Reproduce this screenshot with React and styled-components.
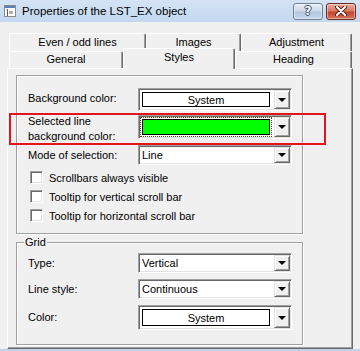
import React from 'react';
import styled, { createGlobalStyle } from 'styled-components';

const GlobalStyle = createGlobalStyle`
  html, body {
    margin: 0;
    padding: 0;
    background: #f0f0f0;
  }
  body {
    font-family: "Liberation Sans", Arial, sans-serif;
    font-size: 11px;
    color: #000;
  }
`;

const Window = styled.div`
  width: 360px;
  height: 351px;
  box-sizing: border-box;
  display: flex;
  flex-direction: column;
  background: #f0f0f0;
  border-bottom: 2px solid #bcd3ec;
  overflow: hidden;
`;

const TitleBar = styled.div`
  height: 22px;
  flex: none;
  display: flex;
  align-items: center;
  padding: 0 4px;
  background: linear-gradient(#d4e4f5, #c3d8ef);
`;

const TitleText = styled.div`
  margin-left: 6px;
  flex: 1;
  font-size: 11.5px;
  color: #000;
`;

const CaptionButton = styled.div`
  box-sizing: border-box;
  width: 30px;
  height: 17px;
  margin-left: ${(p) => (p.$close ? 3 : 0)}px;
  border: 1px solid ${(p) => (p.$close ? '#6b2a25' : '#6e7f98')};
  border-radius: 3px;
  display: flex;
  align-items: center;
  justify-content: center;
  background: ${(p) =>
    p.$close
      ? 'linear-gradient(#eaab9c 0%, #d67b66 45%, #c4472f 55%, #d6735a 100%)'
      : 'linear-gradient(#e8eff8 0%, #ccd9ea 45%, #b3c6de 55%, #c6d6ea 100%)'};
  box-shadow: inset 0 0 0 1px rgba(255, 255, 255, 0.45);
`;

const HelpGlyph = styled.span`
  font-family: "DejaVu Sans", sans-serif;
  font-weight: bold;
  font-size: 12px;
  color: #fff;
  line-height: 1;
  text-shadow: -1px 0 #3a4c66, 1px 0 #3a4c66, 0 -1px #3a4c66, 0 1px #3a4c66;
`;

const Body = styled.div`
  flex: 1;
  padding: 11px 7px 0 7px;
`;

const TabRow = styled.div`
  display: flex;
  margin-left: 2px;
  height: ${(p) => p.$h}px;
`;

const Tab = styled.div`
  box-sizing: border-box;
  width: ${(p) => p.$w}px;
  height: ${(p) => (p.$active ? 21 : p.$h)}px;
  margin-top: ${(p) => (p.$active ? -3 : 0)}px;
  padding-bottom: ${(p) => (p.$active ? 4 : 2)}px;
  display: flex;
  align-items: center;
  justify-content: center;
  background: #f0f0f0;
  border-top: 1px solid #fff;
  border-left: 1px solid #fff;
  border-right: 1px solid #696969;
  border-radius: 2px 2px 0 0;
  box-shadow: inset -1px 0 0 #a0a0a0;
  position: relative;
  z-index: ${(p) => (p.$active ? 2 : 1)};
`;

const Panel = styled.div`
  box-sizing: border-box;
  width: 346px;
  height: 281px;
  padding: 6px 0 0 8px;
  border-top: 1px solid #fff;
  border-left: 1px solid #fff;
  border-right: 1px solid #696969;
  border-bottom: 1px solid #696969;
  box-shadow: inset -1px -1px 0 #a0a0a0;
`;

const Group = styled.div`
  box-sizing: border-box;
  position: relative;
  width: 287px;
  height: ${(p) => p.$h}px;
  margin-top: ${(p) => p.$mt || 0}px;
  padding: ${(p) => p.$pt}px 0 0 11px;
  border: 1px solid #a0a0a0;
  box-shadow: inset 1px 1px 0 #fff, 1px 1px 0 #fff;
`;

const Legend = styled.span`
  position: absolute;
  top: -7px;
  left: 7px;
  padding: 0 1px;
  background: #f0f0f0;
  line-height: 13px;
`;

const Row = styled.div`
  position: relative;
  display: flex;
  align-items: center;
  margin-top: ${(p) => p.$mt || 0}px;

  ${(p) =>
    p.$marked &&
    `
    &::after {
      content: '';
      position: absolute;
      top: -2px;
      bottom: -6px;
      left: -19px;
      right: -24px;
      border: 2px solid #e3141b;
      pointer-events: none;
    }
  `}
`;

const Label = styled.div`
  width: 110px;
  line-height: 15px;
  margin-top: ${(p) => (p.$tall ? -5 : p.$up ? -2 : 0)}px;
  margin-bottom: ${(p) => (p.$tall ? -5 : 0)}px;
  padding-top: ${(p) => (p.$tall ? 4 : 0)}px;
`;

const Combo = styled.div`
  box-sizing: border-box;
  width: 154px;
  height: ${(p) => p.$h}px;
  display: flex;
  align-items: stretch;
  background: #fff;
  border-top: 1px solid #a0a0a0;
  border-left: 1px solid #a0a0a0;
  border-right: 1px solid #fff;
  border-bottom: 1px solid #fff;
  box-shadow: inset 1px 1px 0 #696969, inset -1px -1px 0 #e3e3e3;
  padding: 1px;
`;

const ComboText = styled.div`
  flex: 1;
  display: flex;
  align-items: center;
  padding-left: 2px;
`;

const ColorField = styled.div`
  flex: 1;
  display: flex;
  align-items: center;
  padding: 2px 4px 2px 2px;
`;

const Swatch = styled.div`
  box-sizing: border-box;
  flex: 1;
  height: 100%;
  display: flex;
  align-items: center;
  justify-content: center;
  border: 1px solid #000;
  background: ${(p) => p.$color};
  outline: ${(p) => (p.$focus ? '1px dotted #6b4a10' : 'none')};
  outline-offset: 1px;
`;

const DropButton = styled.div`
  box-sizing: border-box;
  width: 16px;
  display: flex;
  align-items: center;
  justify-content: center;
  background: #f0f0f0;
  border-top: 1px solid #e3e3e3;
  border-left: 1px solid #e3e3e3;
  border-right: 1px solid #696969;
  border-bottom: 1px solid #696969;
  box-shadow: inset 1px 1px 0 #fff, inset -1px -1px 0 #a0a0a0;
`;

const Arrow = styled.span`
  width: 0;
  height: 0;
  border-left: 4px solid transparent;
  border-right: 4px solid transparent;
  border-top: 4px solid #000;
`;

const CheckRow = styled.div`
  display: flex;
  align-items: center;
  height: 19px;
  margin-top: ${(p) => p.$mt || 0}px;
  padding-left: 2px;
`;

const CheckBox = styled.span`
  box-sizing: border-box;
  width: 13px;
  height: 13px;
  margin-right: 6px;
  background: #fff;
  border-top: 1px solid #a0a0a0;
  border-left: 1px solid #a0a0a0;
  border-right: 1px solid #fff;
  border-bottom: 1px solid #fff;
  box-shadow: inset 1px 1px 0 #696969, inset -1px -1px 0 #e3e3e3;
`;

const WindowIcon = () => (
  <svg width="12" height="12" viewBox="0 0 12 12">
    <rect x="0.5" y="0.5" width="11" height="11" fill="#fff" stroke="#8a8a8a" />
    <rect x="1" y="1" width="10" height="2" fill="#5b7fb8" />
    <rect x="3" y="4" width="1" height="7" fill="#c0392b" />
    <rect x="5" y="6" width="4" height="3" fill="#b0b0b0" />
  </svg>
);

const CloseGlyph = () => (
  <svg width="12" height="10" viewBox="0 0 12 10">
    <path d="M2 1 L10 9 M10 1 L2 9" stroke="#5a2018" strokeWidth="4" strokeLinecap="round" />
    <path d="M2 1 L10 9 M10 1 L2 9" stroke="#fff" strokeWidth="2" strokeLinecap="round" />
  </svg>
);

const Drop = ({ h, children }) => (
  <Combo $h={h}>
    {children}
    <DropButton>
      <Arrow />
    </DropButton>
  </Combo>
);

const App = () => {
  return (
    <Window>
      <GlobalStyle />
      <TitleBar>
        <WindowIcon />
        <TitleText>Properties of the LST_EX object</TitleText>
        <CaptionButton>
          <HelpGlyph>?</HelpGlyph>
        </CaptionButton>
        <CaptionButton $close>
          <CloseGlyph />
        </CaptionButton>
      </TitleBar>
      <Body>
        <TabRow $h={18}>
          <Tab $w={137} $h={18}>Even / odd lines</Tab>
          <Tab $w={95} $h={18}>Images</Tab>
          <Tab $w={111} $h={18}>Adjustment</Tab>
        </TabRow>
        <TabRow $h={17}>
          <Tab $w={114} $h={17}>General</Tab>
          <Tab $w={112} $h={17} $active>Styles</Tab>
          <Tab $w={117} $h={17}>Heading</Tab>
        </TabRow>
        <Panel>
          <Group $h={159} $pt={12}>
            <Row>
              <Label $up>Background color:</Label>
              <Drop h={23}>
                <ColorField>
                  <Swatch $color="#fff">System</Swatch>
                </ColorField>
              </Drop>
            </Row>
            <Row $mt={4} $marked>
              <Label $tall>
                Selected line
                <br />
                background color:
              </Label>
              <Drop h={24}>
                <ColorField>
                  <Swatch $color="#00ff00" $focus />
                </ColorField>
              </Drop>
            </Row>
            <Row $mt={6}>
              <Label>Mode of selection:</Label>
              <Drop h={20}>
                <ComboText>Line</ComboText>
              </Drop>
            </Row>
            <CheckRow $mt={3}>
              <CheckBox />
              Scrollbars always visible
            </CheckRow>
            <CheckRow>
              <CheckBox />
              Tooltip for vertical scroll bar
            </CheckRow>
            <CheckRow>
              <CheckBox />
              Tooltip for horizontal scroll bar
            </CheckRow>
          </Group>
          <Group $h={103} $pt={10} $mt={8}>
            <Legend>Grid</Legend>
            <Row>
              <Label>Type:</Label>
              <Drop h={20}>
                <ComboText>Vertical</ComboText>
              </Drop>
            </Row>
            <Row $mt={6}>
              <Label>Line style:</Label>
              <Drop h={20}>
                <ComboText>Continuous</ComboText>
              </Drop>
            </Row>
            <Row $mt={6}>
              <Label>Color:</Label>
              <Drop h={25}>
                <ColorField>
                  <Swatch $color="#fff">System</Swatch>
                </ColorField>
              </Drop>
            </Row>
          </Group>
        </Panel>
      </Body>
    </Window>
  );
};

export default App;
